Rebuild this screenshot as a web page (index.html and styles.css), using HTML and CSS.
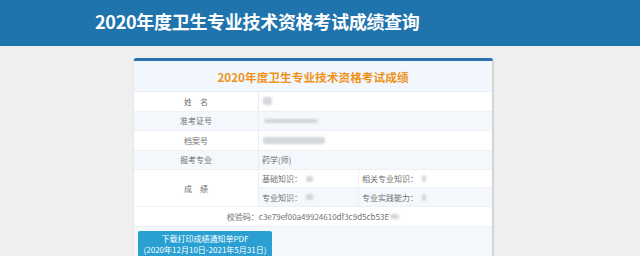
FILE: index.html
```html
<!DOCTYPE html>
<html lang="zh-CN">
<head>
<meta charset="utf-8">
<title>2020年度卫生专业技术资格考试成绩查询</title>
<link rel="stylesheet" href="styles.css">
</head>
<body>
<header class="top">
  <h1 class="top-title">2020年度卫生专业技术资格考试成绩查询</h1>
</header>
<main class="page">
  <section class="card">
    <h2 class="card-title">2020年度卫生专业技术资格考试成绩</h2>
    <div class="row">
      <div class="label">姓　名</div>
      <div class="value"><span class="blur b-name"></span></div>
    </div>
    <div class="row alt">
      <div class="label">准考证号</div>
      <div class="value"><span class="blur b-id"></span></div>
    </div>
    <div class="row">
      <div class="label">档案号</div>
      <div class="value"><span class="blur b-file"></span></div>
    </div>
    <div class="row alt">
      <div class="label">报考专业</div>
      <div class="value">药学(师)</div>
    </div>
    <div class="row score">
      <div class="label score-label">成　绩</div>
      <div class="score-grid">
        <div class="cell">基础知识：<span class="blur b-s"></span></div>
        <div class="cell">相关专业知识：<span class="blur b-s2"></span></div>
        <div class="cell alt">专业知识：<span class="blur b-s"></span></div>
        <div class="cell alt">专业实践能力：<span class="blur b-s2"></span></div>
      </div>
    </div>
    <div class="row check">
      <div class="check-text">校验码：c3e79ef00a49924610df3c9d5cb53E<span class="blur b-tail"></span></div>
    </div>
    <div class="actions">
      <div class="btn" role="button"><span class="btn-line">下载打印成绩通知单PDF</span><span class="btn-line">(2020年12月10日-2021年5月31日)</span></div>
    </div>
  </section>
</main>
</body>
</html>
```

FILE: styles.css
```css
* { box-sizing: border-box; }
html, body { margin: 0; padding: 0; }
body {
  background: #efefef;
  font-family: "Noto Sans CJK SC", "Noto Sans", sans-serif;
  color: #707070;
  overflow: hidden;
  height: 256px;
}
.top {
  background: #1f74ad;
  height: 46px;
  display: flex;
  align-items: center;
  padding: 0 0 5px 95px;
}
.top-title {
  margin: 0;
  color: #fff;
  font-size: 18px;
  font-weight: 700;
  line-height: 1;
  letter-spacing: -0.3px;
}
.page {
  padding: 12px 0 0 133px;
}
.card {
  width: 361px;
  background: #fff;
  border-top: 3px solid #2a6fb0;
  border-left: 1px solid #e6e6e6;
  border-right: 2px solid #d4d4d4;
  border-radius: 4px 4px 0 0;
}
.card-title {
  margin: 0;
  height: 31px;
  display: flex;
  align-items: center;
  justify-content: center;
  background: #f1f7fd;
  color: #f0921a;
  font-size: 11.7px;
  font-weight: 700;
  border-bottom: 1px solid #e9eef3;
}
.row {
  display: flex;
  height: 19.5px;
  font-size: 8px;
  border-bottom: 1px solid #edf1f5;
  background: #fff;
}
.row.alt { background: #f4f8fc; }
.label {
  width: 125px;
  flex: none;
  display: flex;
  align-items: center;
  justify-content: center;
  border-right: 1px solid #e8edf2;
}
.value {
  flex: 1;
  display: flex;
  align-items: center;
  padding-left: 3px;
}
.row.score { height: 37px; }
.score-grid {
  flex: 1;
  display: grid;
  grid-template-columns: 100px 1fr;
  grid-template-rows: 1fr 1fr;
}
.cell {
  display: flex;
  align-items: center;
  padding-left: 3px;
  border-bottom: 1px solid #edf1f5;
}
.cell:nth-child(odd) { border-right: 1px solid #edf1f5; }
.cell.alt { background: #f4f8fc; border-bottom: none; }
.row.check {
  justify-content: center;
  align-items: center;
  height: 19.5px;
}
.check-text { display: flex; align-items: center; }
.blur {
  display: inline-block;
  background: #c9cdd2;
  filter: blur(1.2px);
  border-radius: 2px;
  opacity: 0.8;
}
.b-name { width: 9px; height: 8px; margin-left: 1px; }
.b-id { width: 54px; height: 4px; margin-left: 2px; }
.b-file { width: 62px; height: 7px; margin-left: 1px; }
.b-s { width: 7px; height: 6px; margin-left: 4px; }
.b-s2 { width: 4px; height: 7px; margin-left: 4px; }
.b-tail { width: 9px; height: 5px; margin-left: 1px; }
.actions {
  background: #f4f8fc;
  padding: 4px 0 0 4px;
  height: 40px;
}
.btn {
  width: 134px;
  background: #2a9fd2;
  color: #fff;
  border-radius: 2px;
  font-size: 8px;
  padding: 2px 0 8px;
  text-align: center;
  display: flex;
  flex-direction: column;
}
.btn-line {
  display: block;
  height: 11px;
  line-height: 11px;
  white-space: nowrap;
}
```
